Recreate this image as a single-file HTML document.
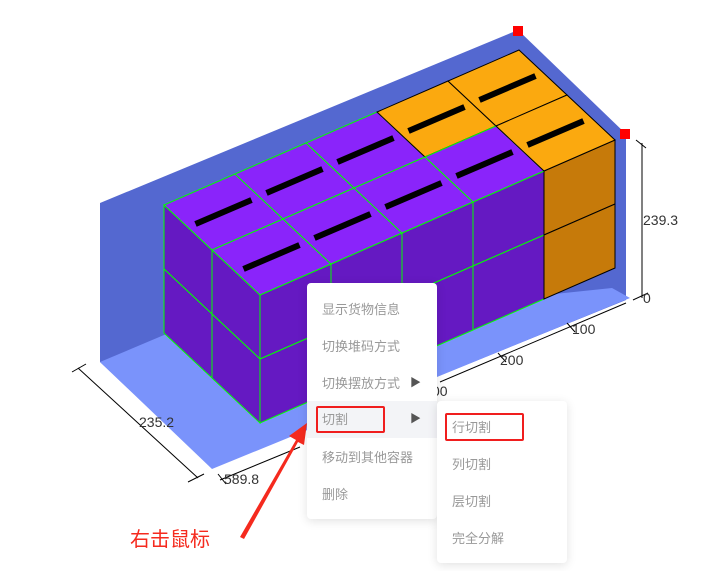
<!DOCTYPE html>
<html><head><meta charset="utf-8"><style>
body{margin:0;width:704px;height:571px;background:#fff;position:relative;overflow:hidden;font-family:"Liberation Sans","Noto Sans CJK SC",sans-serif}
svg{position:absolute;left:0;top:0}
.menu{position:absolute;background:#fff;border-radius:4px;box-shadow:0 2px 10px rgba(0,0,0,.12)}
.it{position:absolute;left:0;right:0;height:37px;line-height:37px;padding-left:15px;font-size:13px;color:#999}
.arr{position:absolute;right:16px;top:0;color:#555;font-size:11px}
.rb{position:absolute;border:2px solid #f01e1e;border-radius:2px}
</style></head><body>
<svg width="704" height="571" viewBox="0 0 704 571">
<polygon points="100,203 518,30 626,134 626,300 212,468 100,362" fill="#5468d0"/>
<polygon points="100,362 164,335 612,288 630,298 212,469" fill="#7a93fb"/>
<g id="boxes"></g>
<!-- dims -->
<g stroke="#000" stroke-width="1" fill="none">
<line x1="78" y1="368" x2="198" y2="478"/>
<line x1="72" y1="372" x2="86" y2="364"/>
<line x1="188" y1="482" x2="204" y2="474"/>
<line x1="220" y1="480" x2="300" y2="447"/>
<line x1="218" y1="474" x2="226" y2="484"/>
<line x1="440" y1="382" x2="626" y2="303"/>
<line x1="498" y1="353" x2="506" y2="362"/>
<line x1="567" y1="323" x2="575" y2="332"/>
<line x1="642" y1="143" x2="642" y2="298"/>
<line x1="636" y1="140" x2="646" y2="148"/>
<line x1="633" y1="300" x2="648" y2="293"/>
</g>
<g font-size="14" fill="#333" font-family="Liberation Sans,sans-serif">
<text x="139" y="427">235.2</text>
<text x="224" y="484">589.8</text>
<text x="500" y="365">200</text>
<text x="572" y="334">100</text>
<text x="432" y="396">00</text>
<text x="643" y="225">239.3</text>
<text x="643" y="303">0</text>
</g>
<rect x="513" y="26" width="10" height="10" fill="#f00" transform="rotate(0)"/>
<rect x="620" y="129" width="10" height="10" fill="#f00"/>
<polygon points="240,537 296,440 289,436 307,423 304,445 298,442 244,539" fill="#f52a1e"/>
<text x="130" y="546" font-size="20" fill="#f52a1e" font-family="Noto Sans CJK SC,sans-serif">右击鼠标</text>
</svg>
<div class="menu" style="left:307px;top:283px;width:130px;height:236px">
<div class="it" style="top:8px">显示货物信息</div>
<div class="it" style="top:45px">切换堆码方式</div>
<div class="it" style="top:82px">切换摆放方式<span class="arr">▶</span></div>
<div class="it" style="top:118px;background:#f3f4f7">切割<span class="arr">▶</span></div>
<div class="it" style="top:156px">移动到其他容器</div>
<div class="it" style="top:193px">删除</div>
<div class="rb" style="left:9px;top:123px;width:65px;height:23px"></div>
</div>
<div class="menu" style="left:437px;top:401px;width:130px;height:162px">
<div class="it" style="top:8px">行切割</div>
<div class="it" style="top:45px">列切割</div>
<div class="it" style="top:82px">层切割</div>
<div class="it" style="top:119px">完全分解</div>
<div class="rb" style="left:8px;top:12px;width:75px;height:24px"></div>
</div>
<script>
(function(){
var g=document.getElementById('boxes');var ns='http://www.w3.org/2000/svg';
var F=[260,295],W=[71,-31],D=[-48,-45],H=64;
function P(i,j,k){return [F[0]+i*W[0]+j*D[0],F[1]+i*W[1]+j*D[1]+k*H];}
function poly(pts,fill,stroke){var p=document.createElementNS(ns,'polygon');p.setAttribute('points',pts.map(function(a){return a.join(',')}).join(' '));p.setAttribute('fill',fill);p.setAttribute('stroke',stroke);p.setAttribute('stroke-width','1');g.appendChild(p);}
function orange(i,j){return i==4||(i==3&&j==1);}
// left faces i=0
for(var k=0;k<2;k++)for(var j=1;j>=0;j--){poly([P(0,j+1,k),P(0,j,k),P(0,j,k+1),P(0,j+1,k+1)],'#6519c2','#00ff00');}
// front faces j=0
for(var k=0;k<2;k++)for(var i=0;i<5;i++){var o=orange(i,0);poly([P(i,0,k),P(i+1,0,k),P(i+1,0,k+1),P(i,0,k+1)],o?'#c67a0a':'#6519c2',o?'#000':'#00ff00');}
// tops
for(var j=1;j>=0;j--)for(var i=0;i<5;i++){var o=orange(i,j);poly([P(i,j,0),P(i+1,j,0),P(i+1,j+1,0),P(i,j+1,0)],o?'#fba90f':'#8a24fa',o?'#000':'#00ff00');
var c=[(P(i,j,0)[0]+P(i+1,j+1,0)[0])/2,(P(i,j,0)[1]+P(i+1,j+1,0)[1])/2];
var l=document.createElementNS(ns,'line');l.setAttribute('x1',c[0]-28);l.setAttribute('y1',c[1]+12);l.setAttribute('x2',c[0]+28);l.setAttribute('y2',c[1]-12);l.setAttribute('stroke','#000');l.setAttribute('stroke-width','6');g.appendChild(l);}
})();
</script>
</body></html>
